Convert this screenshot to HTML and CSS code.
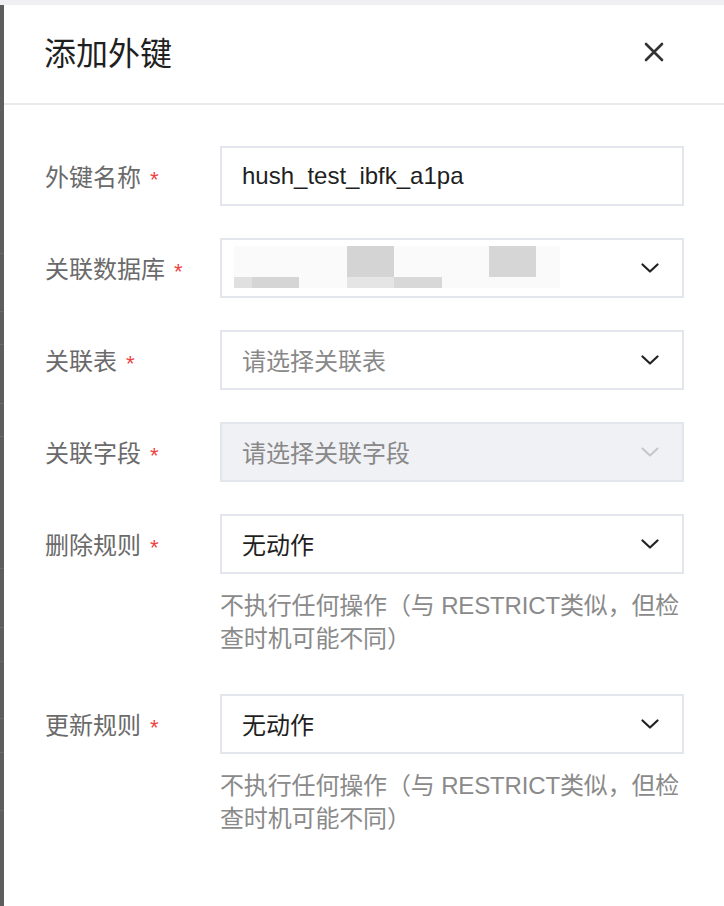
FILE: index.html
```html
<!DOCTYPE html>
<html lang="zh-CN">
<head>
<meta charset="utf-8">
<title>添加外键</title>
<link rel="stylesheet" href="styles.css">
</head>
<body>
<div class="page">
  <div class="topband"></div>
  <div class="main">
    <div class="backdrop"></div>
    <section class="drawer">
      <header class="drawer-header">
        <h1 class="drawer-title">添加外键</h1>
        <button class="close-btn" aria-label="关闭">
          <svg width="24" height="24" viewBox="0 0 24 24"><path d="M4 4 L20 20 M20 4 L4 20" stroke="#333" stroke-width="2.6" stroke-linecap="round" fill="none"/></svg>
        </button>
      </header>
      <form class="form">
        <div class="form-row">
          <label class="form-label">外键名称<span class="req">*</span></label>
          <div class="form-control">
            <div class="input"><span class="value">hush_test_ibfk_a1pa</span></div>
          </div>
        </div>
        <div class="form-row">
          <label class="form-label">关联数据库<span class="req">*</span></label>
          <div class="form-control">
            <div class="input select">
              <div class="blurred">
                <div class="blur-top">
                  <span class="bz w113 c-fa"></span>
                  <span class="bz w47 c-d4"></span>
                  <span class="bz w95 c-fa"></span>
                  <span class="bz w47 c-d6"></span>
                </div>
                <div class="blur-bottom">
                  <span class="bz w18 c-e0"></span>
                  <span class="bz w47 c-d5"></span>
                  <span class="bz w48 c-fa"></span>
                  <span class="bz w47 c-e5"></span>
                  <span class="bz w48 c-d8"></span>
                </div>
              </div>
              <svg class="chev" width="18" height="10" viewBox="0 0 18 10"><path d="M1.5 1.5 L9 8.5 L16.5 1.5" stroke="#222" stroke-width="2.2" fill="none" stroke-linecap="round" stroke-linejoin="round"/></svg>
            </div>
          </div>
        </div>
        <div class="form-row">
          <label class="form-label">关联表<span class="req">*</span></label>
          <div class="form-control">
            <div class="input select">
              <span class="placeholder">请选择关联表</span>
              <svg class="chev" width="18" height="10" viewBox="0 0 18 10"><path d="M1.5 1.5 L9 8.5 L16.5 1.5" stroke="#222" stroke-width="2.2" fill="none" stroke-linecap="round" stroke-linejoin="round"/></svg>
            </div>
          </div>
        </div>
        <div class="form-row">
          <label class="form-label">关联字段<span class="req">*</span></label>
          <div class="form-control">
            <div class="input select disabled">
              <span class="placeholder">请选择关联字段</span>
              <svg class="chev" width="18" height="10" viewBox="0 0 18 10"><path d="M1.5 1.5 L9 8.5 L16.5 1.5" stroke="#c4c6cc" stroke-width="2" fill="none" stroke-linecap="round" stroke-linejoin="round"/></svg>
            </div>
          </div>
        </div>
        <div class="form-row">
          <label class="form-label">删除规则<span class="req">*</span></label>
          <div class="form-control">
            <div class="input select">
              <span class="value">无动作</span>
              <svg class="chev" width="18" height="10" viewBox="0 0 18 10"><path d="M1.5 1.5 L9 8.5 L16.5 1.5" stroke="#222" stroke-width="2.2" fill="none" stroke-linecap="round" stroke-linejoin="round"/></svg>
            </div>
            <p class="help">不执行任何操作（与 RESTRICT类似，但检查时机可能不同）</p>
          </div>
        </div>
        <div class="form-row">
          <label class="form-label">更新规则<span class="req">*</span></label>
          <div class="form-control">
            <div class="input select">
              <span class="value">无动作</span>
              <svg class="chev" width="18" height="10" viewBox="0 0 18 10"><path d="M1.5 1.5 L9 8.5 L16.5 1.5" stroke="#222" stroke-width="2.2" fill="none" stroke-linecap="round" stroke-linejoin="round"/></svg>
            </div>
            <p class="help">不执行任何操作（与 RESTRICT类似，但检查时机可能不同）</p>
          </div>
        </div>
      </form>
    </section>
  </div>
</div>
</body>
</html>
```

FILE: styles.css
```css
* { box-sizing: border-box; }

html, body {
  margin: 0;
  padding: 0;
  height: 100%;
  overflow: hidden;
  background: #ffffff;
  font-family: "Liberation Sans", "Noto Sans CJK SC", sans-serif;
}

.page {
  display: flex;
  flex-direction: column;
  height: 906px;
}

.topband {
  height: 5px;
  background: #f0f0f2;
  flex: none;
}

.main {
  flex: 1;
  display: flex;
}

.backdrop {
  width: 4px;
  flex: none;
  background: linear-gradient(to bottom,
    #5d5d5d 0 248px, #6a6a6a 248px 249px,
    #5d5d5d 249px 306px, #6a6a6a 306px 307px,
    #5d5d5d 307px 339px, #6a6a6a 339px 340px,
    #5d5d5d 340px 398px, #6a6a6a 398px 399px,
    #5d5d5d 399px 431px, #6a6a6a 431px 432px,
    #5d5d5d 432px 563px, #6a6a6a 563px 564px,
    #5d5d5d 564px 622px, #6a6a6a 622px 623px,
    #5d5d5d 623px 656px, #6a6a6a 656px 657px,
    #5d5d5d 657px 713px, #6a6a6a 713px 714px,
    #5d5d5d 714px 747px, #6a6a6a 747px 748px,
    #5d5d5d 748px 805px, #6a6a6a 805px 806px,
    #5d5d5d 806px);
}

.drawer {
  flex: 1;
  background: #ffffff;
  display: flex;
  flex-direction: column;
}

.drawer-header {
  height: 100px;
  border-bottom: 2px solid #e8eaee;
  display: flex;
  align-items: center;
  justify-content: space-between;
  padding: 0 58px 4px 40px;
}

.drawer-title {
  margin: 0 0 2px 0;
  font-family: "Noto Sans CJK SC", sans-serif;
  font-size: 32px;
  font-weight: 400;
  color: #1f1f1f;
  line-height: 1;
}

.close-btn {
  border: 0;
  background: none;
  padding: 0;
  width: 24px;
  height: 24px;
  display: flex;
  cursor: pointer;
}

.form {
  padding: 41px 40px 0 40px;
}

.form-row {
  display: flex;
  margin-bottom: 32px;
}

.form-label {
  width: 176px;
  flex: none;
  height: 60px;
  display: flex;
  align-items: center;
  padding-left: 1px;
  padding-bottom: 2px;
  font-size: 24px;
  color: #6a6a6a;
}

.req {
  color: #ef4444;
  font-family: "Liberation Sans", sans-serif;
  font-size: 22px;
  margin-left: 9px;
  line-height: 1;
  padding-top: 9px;
}

.form-control {
  flex: 1;
  min-width: 0;
}

.input {
  height: 60px;
  border: 2px solid #e3e6ec;
  background: #ffffff;
  display: flex;
  align-items: center;
  padding: 0 23px 1px 20px;
  font-size: 24px;
}

.input.disabled {
  background: #f0f1f5;
}

.select {
  justify-content: space-between;
}

.value {
  color: #1f1f1f;
}

.placeholder {
  color: #888888;
}

.chev {
  flex: none;
  display: block;
}

.blurred {
  width: 326px;
  height: 42px;
  margin-left: -8px;
  margin-top: -1px;
  display: flex;
  flex-direction: column;
  background: #fafafa;
}

.blur-top {
  height: 31px;
  display: flex;
}

.blur-bottom {
  height: 11px;
  display: flex;
}

.bz { display: block; height: 100%; }
.w18 { width: 18px; }
.w47 { width: 47px; }
.w48 { width: 48px; }
.w95 { width: 95px; }
.w113 { width: 113px; }
.c-fa { background: #fafafa; }
.c-d4 { background: #d4d4d4; }
.c-d5 { background: #d5d5d5; }
.c-d6 { background: #d6d6d6; }
.c-d8 { background: #d8d8d8; }
.c-e0 { background: #e0e0e0; }
.c-e5 { background: #e5e5e5; }

.help {
  margin: 0;
  padding: 15px 0 7px 0;
  font-size: 24px;
  line-height: 33px;
  letter-spacing: -0.15px;
  color: #8a8a8a;
}
```
